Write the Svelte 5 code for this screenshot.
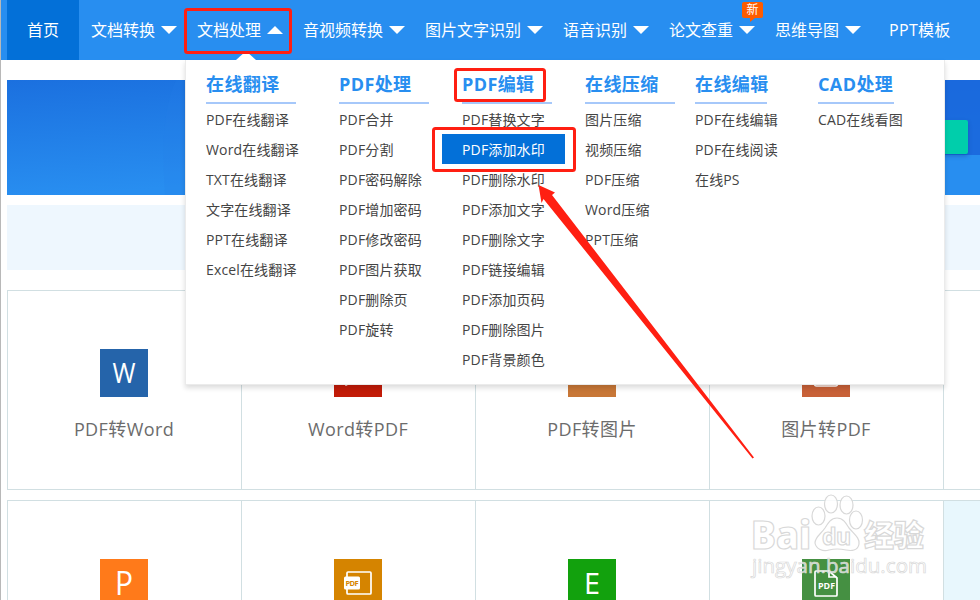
<script>
  const nav = [
    { label: '文档转换' },
    { label: '文档处理', open: true },
    { label: '音视频转换' },
    { label: '图片文字识别' },
    { label: '语音识别' },
    { label: '论文查重', badge: '新' },
    { label: '思维导图' }
  ]

  const menu = [
    { title: '在线翻译', line: 90, items: ['PDF在线翻译', 'Word在线翻译', 'TXT在线翻译', '文字在线翻译', 'PPT在线翻译', 'Excel在线翻译'] },
    { title: 'PDF处理', line: 90, items: ['PDF合并', 'PDF分割', 'PDF密码解除', 'PDF增加密码', 'PDF修改密码', 'PDF图片获取', 'PDF删除页', 'PDF旋转'] },
    { title: 'PDF编辑', line: 90, items: ['PDF替换文字', 'PDF添加水印', 'PDF删除水印', 'PDF添加文字', 'PDF删除文字', 'PDF链接编辑', 'PDF添加页码', 'PDF删除图片', 'PDF背景颜色'] },
    { title: '在线压缩', line: 90, items: ['图片压缩', '视频压缩', 'PDF压缩', 'Word压缩', 'PPT压缩'] },
    { title: '在线编辑', line: 72, items: ['PDF在线编辑', 'PDF在线阅读', '在线PS'] },
    { title: 'CAD处理', line: 76, items: ['CAD在线看图'] }
  ]

  const active = 'PDF添加水印'

  const cards = [
    { label: 'PDF转Word', color: '#2564aa', letter: 'W', size: 28, width: 23, base: 34 },
    { label: 'Word转PDF', color: '#c21b08', icon: 'pdf' },
    { label: 'PDF转图片', color: '#c87737' },
    { label: '图片转PDF', color: '#c86138', icon: 'picture' },
    {},
    { color: '#ff7a1a', letter: 'P', size: 32, width: 18, base: 36 },
    { color: '#d58400', icon: 'sheet' },
    { color: '#12a10d', letter: 'E', size: 30, width: 16, base: 35 },
    { color: '#459042', icon: 'file' },
    { tint: true }
  ]
</script>

<div class="page">
  <header>
    <a class="home" href="#home">首页</a>
    <nav>
      {#each nav as item}
        <a class="item" href="#nav">
          {item.label}
          <svg width="16" height="8" viewBox="0 0 16 8"><path d={item.open ? 'M0 8L8 0L16 8Z' : 'M0 0L16 0L8 8Z'} fill="#fff" /></svg>
          {#if item.badge}<span class="badge">{item.badge}</span>{/if}
        </a>
      {/each}
      <a class="item last" href="#ppt">PPT模板</a>
    </nav>
  </header>

  <section class="hero">
    <svg width="973" height="115" viewBox="0 0 973 115">
      <path d="M169 0C158 25 154 55 158 115H300V0Z" fill="#2882ea" opacity="0.18" />
      <path d="M900 0H973V75H900Z" fill="#1965da" opacity="0.85" />
      <path d="M900 75H973V115H900Z" fill="#288ef0" />
    </svg>
    <span class="start"></span>
  </section>
  <section class="band"></section>

  <main>
    {#each cards as card}
      <div class="card" class:tint={card.tint}>
        {#if card.color}
          <div class="icon" style="background: {card.color}">
            {#if card.icon === 'sheet'}
              <svg width="48" height="48" viewBox="0 0 48 48">
                <path d="M13 18V14Q13 13 14 13H36Q37 13 37 14V34Q37 35 36 35H14Q13 35 13 34V30" fill="none" stroke="#fff" stroke-width="1.7" />
                <rect x="10" y="17.5" width="16" height="13" rx="1.5" fill="#fff" />
                <text x="18" y="27" font-size="7.5" font-weight="bold" text-anchor="middle" textLength="13" fill="#d58400">PDF</text>
              </svg>
            {:else if card.icon === 'file'}
              <svg width="48" height="48" viewBox="0 0 48 48">
                <path d="M14 12H27L35 19V36Q35 37 34 37H14Q13 37 13 36V13Q13 12 14 12ZM27 12V18H35" fill="none" stroke="#fff" stroke-width="1.7" />
                <text x="24.5" y="30" font-size="8" font-weight="bold" text-anchor="middle" textLength="17" lengthAdjust="spacingAndGlyphs" fill="#fff">PDF</text>
              </svg>
            {:else if card.icon === 'picture'}
              <svg width="48" height="48" viewBox="0 0 48 48"><rect x="12.5" y="12" width="23" height="25" rx="2" fill="none" stroke="#fff" stroke-width="1.5" /></svg>
            {:else if card.icon === 'pdf'}
              <svg width="48" height="48" viewBox="0 0 48 48"><path d="M12 36Q11 33 18 30Q25 19 23 13Q23 25 35 29Q29 27 18 30Q15 35 12 36Z" fill="none" stroke="#fff" stroke-width="1.5" /></svg>
            {:else if card.letter}
              <svg width="48" height="48" viewBox="0 0 48 48">
                <text x="24" y={card.base} font-size={card.size} text-anchor="middle" textLength={card.width} lengthAdjust="spacingAndGlyphs" fill="#fff">{card.letter}</text>
              </svg>
            {/if}
          </div>
          <div class="label">{card.label}</div>
        {/if}
      </div>
    {/each}
  </main>

  <div class="dropdown">
    {#each menu as column}
      <div class="column">
        <h3 style="width: {column.line}px">{column.title}</h3>
        <ul>
          {#each column.items as item}
            <li class:active={item === active}>{item}</li>
          {/each}
        </ul>
      </div>
    {/each}
  </div>

  <svg class="overlay" width="980" height="600" viewBox="0 0 980 600">
    <path d="M236 60L246 51L256 60Z" fill="#fff" />
    <g fill="none" stroke="#ff1f12" stroke-width="3">
      <rect x="185.5" y="9.5" width="105" height="43" rx="2" />
      <rect x="455.5" y="69.5" width="89" height="31" rx="2" />
      <rect x="433.5" y="128.5" width="141" height="42" rx="2" />
    </g>
    <path d="M538.5 185L555 192.5L552 195L754 457.500L752.500 458.500L543.500 199L541.500 203Z" fill="#ff1f12" />

    <g class="watermark">
      <text x="751" y="548.5" font-size="39" font-weight="800" textLength="60" lengthAdjust="spacingAndGlyphs">Bai</text>
      <ellipse cx="818.5" cy="516" rx="6.5" ry="9" />
      <ellipse cx="831" cy="504" rx="6.5" ry="9" />
      <ellipse cx="846.5" cy="505" rx="6.5" ry="9" />
      <ellipse cx="856" cy="520" rx="6.5" ry="9" />
      <path d="M837 518C843 518 846 523 849 528C854 534 860 538 859 544C858 551 851 551 846 550Q837 548 829 550C823 552 816 549 815 543C815 537 821 534 825 528C828 523 831 518 837 518Z" />
      <text x="822" y="545" font-size="23" font-weight="bold" textLength="29">du</text>
      <text x="864" y="546" font-size="30" font-weight="900" textLength="60">经验</text>
      <text class="url" x="752" y="573" font-size="20.5" textLength="175">jingyan.baidu.com</text>
    </g>
  </svg>
</div>

<style>
  :global(body) {
    margin: 0;
  }

  .page {
    position: relative;
    box-sizing: border-box;
    width: 980px;
    height: 600px;
    overflow: hidden;
    border-left: 1px solid #b8b8b8;
    background: #fff;
    font-family: "Open Sans", "Noto Sans CJK SC", sans-serif;
    font-size: 14px;
    color: #444;
  }

  a {
    color: #fff;
    text-decoration: none;
  }

  header {
    display: flex;
    height: 60px;
    padding-left: 6px;
    background: #288ef0;
    font-size: 16px;
    line-height: 60px;
    white-space: nowrap;
  }

  .home {
    width: 72px;
    text-align: center;
    background: #0370d8;
  }

  nav {
    display: flex;
    gap: 20px;
    padding-left: 12px;
  }

  .item {
    position: relative;
    display: flex;
    align-items: center;
    gap: 6px;
  }

  .item.last {
    margin-left: 8px;
    letter-spacing: 0.3px;
  }

  .badge {
    position: absolute;
    top: 2px;
    right: -8px;
    width: 21px;
    height: 16px;
    border-radius: 2px;
    background: #ff5c00;
    font-size: 12px;
    line-height: 16px;
    text-align: center;
  }

  .badge::after {
    content: '';
    position: absolute;
    left: 8px;
    top: 16px;
    border-top: 4px solid #ff5c00;
    border-right: 5px solid transparent;
  }

  .hero {
    position: relative;
    height: 115px;
    margin: 20px 0 0 6px;
    background: linear-gradient(176deg, #1b70df, #288ef0 65%);
  }

  .start {
    position: absolute;
    top: 40px;
    right: 12px;
    width: 160px;
    height: 34px;
    border-radius: 2px;
    background: #00ceab;
    box-shadow: 0 2px 4px rgba(0, 40, 120, 0.3);
  }

  .band {
    height: 65px;
    margin: 10px 0 0 6px;
    background: #eef7fe;
  }

  main {
    display: grid;
    grid-template-columns: repeat(5, 234px);
    grid-auto-rows: 200px;
    row-gap: 10px;
    margin: 20px 0 0 6px;
  }

  .card {
    box-sizing: border-box;
    display: flex;
    flex-direction: column;
    align-items: center;
    padding: 58px 1px 0 0;
    border: 1px solid #d1dfe2;
    border-right: none;
  }

  .card.tint {
    background: #e8f7fd;
  }

  .icon {
    width: 48px;
    height: 48px;
  }

  .label {
    margin-top: 17px;
    font-size: 18px;
    letter-spacing: 0.4px;
    line-height: 30px;
    color: #6c6c6c;
  }

  .dropdown {
    position: absolute;
    top: 60px;
    left: 184px;
    box-sizing: border-box;
    display: grid;
    grid-template-columns: 133px 123px 123px 110px 123px 126px;
    width: 760px;
    height: 325px;
    padding-left: 20px;
    border: 1px solid #ebebeb;
    border-top: none;
    background: #fff;
    box-shadow: 0 3px 5px rgba(0, 0, 0, 0.14);
    white-space: nowrap;
  }

  h3 {
    box-sizing: border-box;
    height: 44px;
    margin: 0;
    padding-top: 9px;
    border-bottom: 2px solid #a6c8fa;
    font-size: 18px;
    letter-spacing: 0.4px;
    line-height: 30px;
    color: #288ef0;
  }

  ul {
    margin: 0;
    padding: 0;
    list-style: none;
  }

  li {
    box-sizing: border-box;
    height: 30px;
    padding-top: 1px;
    letter-spacing: 0.15px;
    line-height: 30px;
  }

  li.active {
    margin: 0 20px 0 -20px;
    padding-left: 20px;
    background: #0370d8;
    color: #fff;
  }

  .overlay {
    position: absolute;
    top: 0;
    left: -1px;
  }

  .watermark {
    fill: #fff;
    fill-opacity: 0.85;
    stroke: #d8d8d8;
    stroke-width: 1.2;
  }

  .watermark .url {
    fill-opacity: 0.7;
    stroke-width: 0.7;
  }
</style>
